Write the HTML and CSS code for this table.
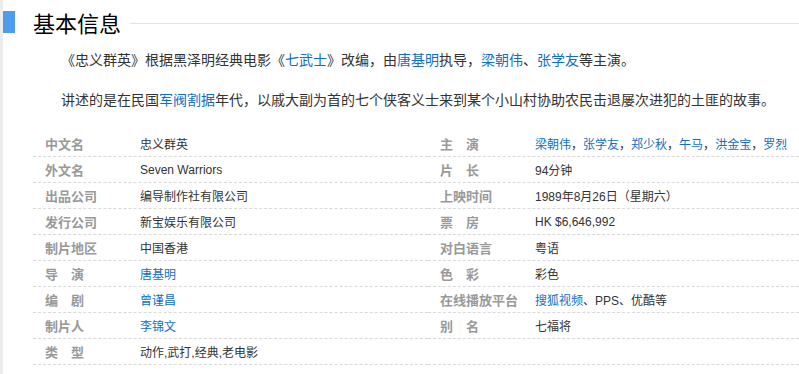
FILE: index.html
```html
<!DOCTYPE html>
<html lang="zh-CN">
<head>
<meta charset="utf-8">
<title>基本信息</title>
<link rel="stylesheet" href="styles.css">
</head>
<body>
<div class="page">
  <div class="head">
    <span class="head-bar"></span>
    <h2 class="head-title">基本信息</h2>
    <span class="head-line"></span>
  </div>
  <p class="para">《忠义群英》根据黑泽明经典电影《<a href="#">七武士</a>》改编，由<a href="#">唐基明</a>执导，<a href="#">梁朝伟</a>、<a href="#">张学友</a>等主演。</p>
  <p class="para">讲述的是在民国<a href="#">军阀割据</a>年代，以戚大副为首的七个侠客义士来到某个小山村协助农民击退屡次进犯的土匪的故事。</p>
  <div class="info">
    <dl class="col">
      <div class="row"><dt>中文名</dt><dd>忠义群英</dd></div>
      <div class="row"><dt>外文名</dt><dd>Seven Warriors</dd></div>
      <div class="row"><dt>出品公司</dt><dd>编导制作社有限公司</dd></div>
      <div class="row"><dt>发行公司</dt><dd>新宝娱乐有限公司</dd></div>
      <div class="row"><dt>制片地区</dt><dd>中国香港</dd></div>
      <div class="row"><dt>导　演</dt><dd><a href="#">唐基明</a></dd></div>
      <div class="row"><dt>编　剧</dt><dd><a href="#">曾谨昌</a></dd></div>
      <div class="row"><dt>制片人</dt><dd><a href="#">李锦文</a></dd></div>
      <div class="row"><dt>类　型</dt><dd>动作,武打,经典,老电影</dd></div>
    </dl>
    <dl class="col">
      <div class="row"><dt>主　演</dt><dd><a href="#">梁朝伟</a>，<a href="#">张学友</a>，<a href="#">郑少秋</a>，<a href="#">午马</a>，<a href="#">洪金宝</a>，<a href="#">罗烈</a></dd></div>
      <div class="row"><dt>片　长</dt><dd>94分钟</dd></div>
      <div class="row"><dt>上映时间</dt><dd>1989年8月26日（星期六）</dd></div>
      <div class="row"><dt>票　房</dt><dd>HK $6,646,992</dd></div>
      <div class="row"><dt>对白语言</dt><dd>粤语</dd></div>
      <div class="row"><dt>色　彩</dt><dd>彩色</dd></div>
      <div class="row"><dt>在线播放平台</dt><dd><a href="#">搜狐视频</a>、PPS、优酷等</dd></div>
      <div class="row"><dt>别　名</dt><dd>七福将</dd></div>
      <div class="row"><dt></dt><dd></dd></div>
    </dl>
  </div>
</div>
</body>
</html>
```

FILE: styles.css
```css
html, body {
  margin: 0;
  padding: 0;
  background: #fff;
  overflow: hidden;
}
body {
  font-family: "Liberation Sans", Arial, "Noto Sans CJK SC", sans-serif;
  color: #333;
}
.page {
  border-left: 3px solid #ececec;
  min-height: 374px;
  box-sizing: border-box;
  padding-top: 11px;
}
.head {
  display: flex;
  align-items: center;
  height: 22px;
}
.head-bar {
  width: 12px;
  height: 22px;
  background: #4f9bec;
  flex: none;
}
.head-title {
  margin: 0 0 0 18px;
  font-size: 22px;
  line-height: 22px;
  font-weight: normal;
  color: #000;
  font-family: "Noto Sans CJK SC", sans-serif;
  flex: none;
}
.head-line {
  flex: 1;
  height: 1px;
  background: #e3e3e3;
  margin-left: 9px;
  margin-top: 2px;
}
.para {
  margin: 15px 0 0 30px;
  font-size: 14px;
  line-height: 24px;
  text-indent: 2em;
  color: #333;
}
.para + .para {
  margin-top: 16px;
}
a {
  color: #136ec2;
  text-decoration: none;
}
.info {
  display: grid;
  grid-template-columns: 395px 1fr;
  margin: 19px 0 0 30px;
}
.col {
  margin: 0;
}
.row {
  display: flex;
  height: 25px;
  align-items: center;
  border-bottom: 1px dashed #d9d9d9;
  font-size: 12px;
}
.row dt {
  width: 95px;
  padding-left: 12px;
  flex: none;
  font-weight: bold;
  color: #999;
  font-size: 13px;
  white-space: nowrap;
}
.row dd {
  margin: 0;
  color: #333;
  white-space: nowrap;
}
```
